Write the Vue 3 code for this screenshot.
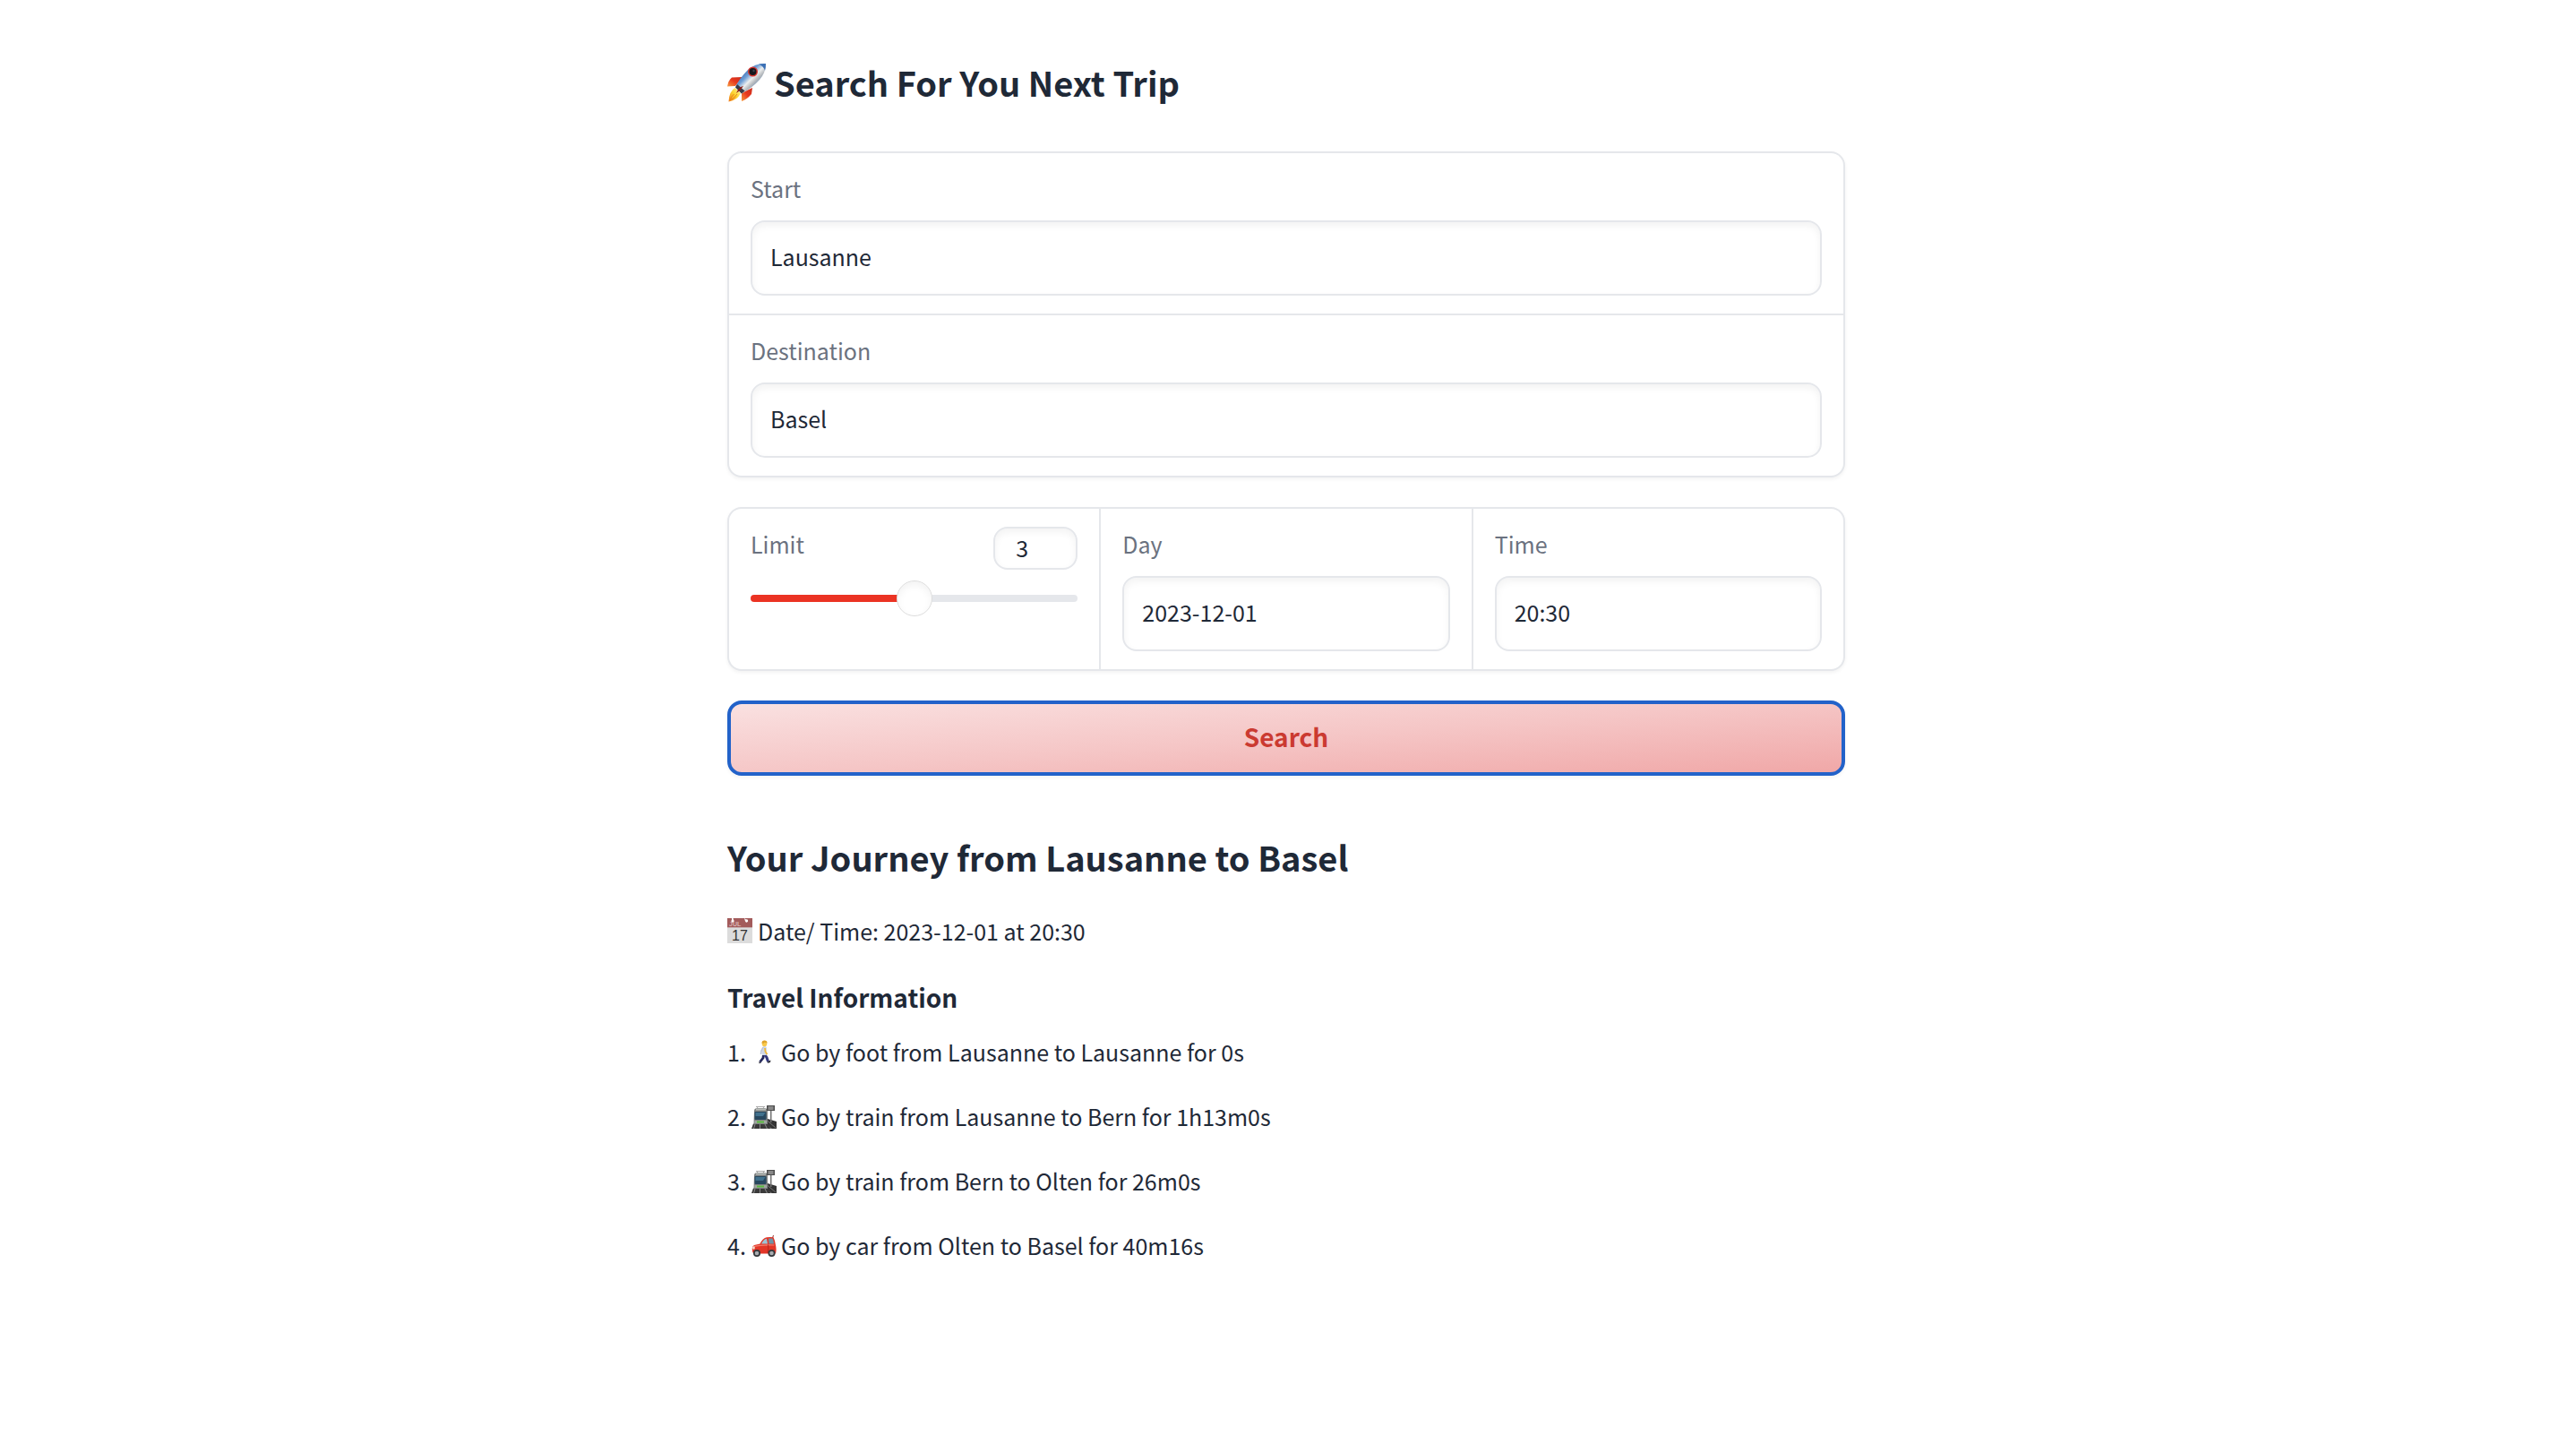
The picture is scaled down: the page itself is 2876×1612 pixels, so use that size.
<script setup>
import { ref, computed } from 'vue'

const start = ref('Lausanne')
const destination = ref('Basel')
const limit = ref(3)
const day = ref('2023-12-01')
const time = ref('20:30')

const min = 1
const max = 5
const fill = computed(() => `${((limit.value - min) / (max - min)) * 100}%`)

const steps = [
  { icon: 'walk', text: 'Go by foot from Lausanne to Lausanne for 0s' },
  { icon: 'train', text: 'Go by train from Lausanne to Bern for 1h13m0s' },
  { icon: 'train', text: 'Go by train from Bern to Olten for 26m0s' },
  { icon: 'car', text: 'Go by car from Olten to Basel for 40m16s' },
]
</script>

<template>
  <div class="page">
    <main class="content">
      <h1 class="title">
        <svg class="rocket" viewBox="0 0 44 44" aria-hidden="true">
          <defs>
            <linearGradient id="hull" x1="0" y1="0" x2="1" y2="1">
              <stop offset="0.25" stop-color="#3a6cb0" />
              <stop offset="0.4" stop-color="#6f9fd6" />
              <stop offset="0.52" stop-color="#eceeee" />
              <stop offset="0.62" stop-color="#b4b8bc" />
              <stop offset="0.78" stop-color="#4f7db4" />
            </linearGradient>
            <linearGradient id="flame" x1="1" y1="0" x2="0" y2="1">
              <stop offset="0" stop-color="#fff3a0" />
              <stop offset="0.5" stop-color="#fbd32f" />
              <stop offset="1" stop-color="#f07818" />
            </linearGradient>
            <linearGradient id="fin" x1="1" y1="0" x2="0" y2="1">
              <stop offset="0" stop-color="#c92c1c" />
              <stop offset="0.5" stop-color="#e8391f" />
              <stop offset="1" stop-color="#f79a3e" />
            </linearGradient>
          </defs>
          <path d="M17 16 L5 16.500 Q1 20 0 26.500 L9 26 Z" fill="url(#fin)" />
          <path d="M28 28 L27 35 Q22 41 16 43 L16 34 Z" fill="url(#fin)" />
          <path d="M8.500 28 Q2 32 1.500 43.500 Q11 42 15 34 Z" fill="url(#flame)" />
          <path d="M7.500 35 Q4 38 3 42 Q8 40 11 35" fill="none" stroke="#e9831b" stroke-width="1" />
          <path d="M43 1 Q32 0 23 8 Q13 18 9 27.500 L16 34.500 Q28 28 36 19 Q43 11 43 1 Z" fill="url(#hull)" />
          <path d="M43 1 Q39 .6 35 1.700 Q41 4 42 9 Q43.200 4.500 43 1 Z" fill="#3a70b5" />
          <path d="M9 27.500 L11 24 L19.500 31.500 L16 34.500 Z" fill="#3b3c47" />
          <path d="M15 27 Q12 29 10 34 Q15 31 18 26 Z" fill="#8d1c16" />
          <circle cx="28.500" cy="10" r="5.500" fill="#d6342e" />
          <circle cx="28.500" cy="10" r="4" fill="#16181d" />
          <circle cx="29.500" cy="9" r="1.200" fill="#3b4350" />
        </svg>
        <span>Search For You Next Trip</span>
      </h1>

      <form class="form" @submit.prevent>
        <div class="panel rows">
          <div class="field">
            <label class="label" for="start">Start</label>
            <input id="start" v-model="start" class="box" type="text" />
          </div>
          <div class="field">
            <label class="label" for="destination">Destination</label>
            <input id="destination" v-model="destination" class="box" type="text" />
          </div>
        </div>

        <div class="panel columns">
          <div class="field">
            <div class="limit-head">
              <label class="label" for="limit">Limit</label>
              <input v-model.number="limit" class="box number" type="number" :min="min" :max="max" aria-label="Limit value" />
            </div>
            <input id="limit" v-model.number="limit" class="slider" type="range" :min="min" :max="max" :style="{ '--fill': fill }" />
          </div>
          <div class="field">
            <label class="label" for="day">Day</label>
            <input id="day" v-model="day" class="box" type="text" />
          </div>
          <div class="field">
            <label class="label" for="time">Time</label>
            <input id="time" v-model="time" class="box" type="text" />
          </div>
        </div>

        <button class="search" type="submit">Search</button>
      </form>

      <section class="result">
        <h2 class="title">Your Journey from Lausanne to Basel</h2>
        <p class="line date">
          <svg class="calendar" viewBox="0 0 28 28" aria-hidden="true">
            <rect width="28" height="28" fill="#dcdcdc" />
            <rect width="28" height="10" fill="#a35b5b" />
            <rect y="10" width="28" height="1" fill="#c9b3b3" />
            <path d="M5 0 L6.500 0 L7 2 A1.600 1.600 0 1 1 5 2 Z M19 0 L21 1.500 A1.600 1.600 0 1 1 20 3.500 Z" fill="#fff" />
            <text x="2" y="9" class="month">JUL</text>
            <text x="14" y="25" text-anchor="middle" class="date-number">17</text>
          </svg>
          <span>Date/ Time: 2023-12-01 at 20:30</span>
        </p>
        <h3 class="subtitle">Travel Information</h3>
        <ol class="steps">
          <li v-for="(step, i) in steps" :key="i" class="line">
            <span class="index">{{ i + 1 }}.</span>
            <svg v-if="step.icon === 'walk'" class="icon" viewBox="0 0 28 28" aria-hidden="true">
              <path d="M13.500 17 L13 21 L9.500 25.500" fill="none" stroke="#25285c" stroke-width="2.800" />
              <path d="M14.500 17 L17 20.500 L18.500 25" fill="none" stroke="#34397f" stroke-width="3" />
              <path d="M8.500 25 L11 26.500 L8.500 27.200 Z M17.500 25.500 L21.500 23.500 L21 26 L18 26.800 Z" fill="#2a2b36" />
              <path d="M13 8 Q16.500 7 17 10 L16.500 18 L12 18 Q11.500 12 13 8 Z" fill="#cfd8e8" />
              <path d="M13 9 L11 13 L10.500 17" fill="none" stroke="#bcc6da" stroke-width="1.600" />
              <path d="M15 10 L15.500 14 L17.500 17" fill="none" stroke="#f0b93c" stroke-width="1.800" />
              <ellipse cx="14.500" cy="5" rx="2.800" ry="3.200" fill="#f9c94b" />
              <path d="M11.500 4.500 Q11.500 1.500 14.500 1.500 Q17.800 1.500 17.500 4.500 Q14 3 13.500 5 Z" fill="#dfa32c" />
            </svg>
            <svg v-else-if="step.icon === 'train'" class="icon" viewBox="0 0 28 28" aria-hidden="true">
              <path d="M2 22.500 L18 22.500 L22 28 L0 28 Z" fill="#3a3a3a" />
              <path d="M4 23 L2.500 28 M9.500 23 L9.500 28 M15 23 L17.500 28" stroke="#8b8b8b" stroke-width="1" />
              <path d="M18 17 L28 20 L28 28 L22.500 28 L16 22 Z" fill="#343434" />
              <path d="M17.500 19 L27 27" stroke="#777" stroke-width="1" />
              <path d="M5 3.500 H15 M7 3.500 L6 6 M13 3.500 L14 6" stroke="#aaa" stroke-width="1" fill="none" />
              <path d="M3 8 Q3 5 7 5 H14 Q18 5 18 8 L18 23 L2.500 23 Z" fill="#7d8080" />
              <rect x="5" y="5.500" width="11" height="2" fill="#b8bbb8" />
              <rect x="3.500" y="9" width="13" height="9" rx="1" fill="#28485e" />
              <path d="M4.500 10 H15.500 L13 14 H4.500 Z" fill="#41718d" />
              <rect x="3.500" y="19" width="13.500" height="3" fill="#a0a6a0" />
              <rect x="6" y="19.500" width="8" height="2" fill="#58b83e" />
              <rect x="21" y="7" width="1.500" height="14" fill="#737373" />
              <rect x="17" y="2" width="9" height="6" fill="#4d4d4d" />
              <path d="M18.500 4 H24.500 M18.500 6 H24.500" stroke="#c4c4c4" stroke-width="1" />
            </svg>
            <svg v-else class="icon" viewBox="0 0 28 28" aria-hidden="true">
              <path d="M23.500 6 L24.500 3" stroke="#8f3029" stroke-width="1" />
              <path d="M1 20 Q0 15.500 3 14 L9.500 12.500 Q12.500 6 17 5.200 Q21 4.600 24.500 5.200 Q26.500 9 27 14 Q28.200 19 27 23.500 L2.500 23.500 Q.7 22 1 20 Z" fill="#e23628" />
              <path d="M11 12.500 Q13.500 7.500 17 6.800 L18 12.500 Z" fill="#9cc3d4" />
              <path d="M19 6.600 L23.500 6.600 Q24.800 9 25 12.500 L19.500 12.500 Z" fill="#6f94a6" />
              <path d="M3 15.500 Q10 13.500 25.500 14" fill="none" stroke="#f37b6b" stroke-width="1.200" />
              <path d="M18.500 13.500 Q19.500 18 18 22.500" fill="none" stroke="#b5271e" stroke-width="1" />
              <ellipse cx="2.500" cy="17" rx="1.300" ry="1.800" fill="#f7e7d6" />
              <circle cx="6" cy="23" r="4" fill="#35383b" />
              <circle cx="6" cy="23" r="2.300" fill="#a8acb0" />
              <circle cx="22.500" cy="23" r="4" fill="#35383b" />
              <circle cx="22.500" cy="23" r="2.300" fill="#a8acb0" />
            </svg>
            <span>{{ step.text }}</span>
          </li>
        </ol>
      </section>
    </main>
  </div>
</template>

<style>
body {
  margin: 0;
  background: #fff;
}
</style>

<style scoped>
.page {
  box-sizing: border-box;
  padding: 62px 4px 60px 0;
  font-family: "Noto Sans CJK SC", "Noto Sans", sans-serif;
  font-size: 25px;
  line-height: 40px;
  color: #1f2937;
}

.content {
  max-width: 1248px;
  margin: 0 auto;
}

.title {
  display: flex;
  align-items: center;
  margin: 0;
  font-size: 38px;
  font-weight: 600;
  line-height: 60px;
}

.rocket {
  width: 44px;
  height: 44px;
  margin-right: 8px;
}

.form {
  display: flex;
  flex-direction: column;
  gap: 33px;
  margin-top: 47px;
}

.panel {
  display: grid;
  gap: 2px;
  overflow: hidden;
  border: 2px solid #e5e7eb;
  border-radius: 16px;
  background: #e5e7eb;
  box-shadow: 0 2px 4px rgba(0, 0, 0, 0.05);
}

.columns {
  grid-template-columns: repeat(3, 1fr);
}

.field {
  min-width: 0;
  padding: 20px 24px;
  background: #fff;
}

.label {
  display: block;
  margin-bottom: 17px;
  line-height: 38px;
  color: #6b7280;
}

.box {
  display: block;
  box-sizing: border-box;
  width: 100%;
  height: 84px;
  padding: 0 20px 4px;
  border: 2px solid #e5e7eb;
  border-radius: 16px;
  outline: none;
  background: #fff;
  box-shadow: inset 0 4px 8px rgba(0, 0, 0, 0.05);
  font: inherit;
  color: inherit;
}

.limit-head {
  display: flex;
  justify-content: space-between;
  align-items: flex-start;
}

.number {
  width: 94px;
  height: 48px;
  padding: 0 0 2px 23px;
}

.slider {
  display: block;
  width: 100%;
  height: 40px;
  margin: 5px 0 0;
  appearance: none;
  background: transparent;
}

.slider::-webkit-slider-runnable-track {
  height: 8px;
  border-radius: 4px;
  background: linear-gradient(to right, #eb3323 var(--fill), #e5e7eb var(--fill));
}

.slider::-webkit-slider-thumb {
  appearance: none;
  box-sizing: border-box;
  width: 40px;
  height: 40px;
  margin-top: -16px;
  border: 1px solid #dcdcdc;
  border-radius: 50%;
  background: #fff;
  box-shadow: inset 0 4px 8px rgba(0, 0, 0, 0.05);
}

.search {
  height: 84px;
  padding: 0 0 4px;
  border: 4px solid #2262c9;
  border-radius: 16px;
  background: linear-gradient(to bottom right, #fae2e2, #f5c6c6 50%, #f0a6a6) border-box;
  box-shadow: 0 2px 4px rgba(0, 0, 0, 0.05);
  font: inherit;
  font-size: 28px;
  font-weight: 600;
  color: #cb3a31;
}

.result {
  margin-top: 61px;
}

.line {
  display: flex;
  align-items: center;
}

.date {
  margin: 32px 0 0;
}

.calendar {
  overflow: visible;
  width: 28px;
  height: 28px;
  margin-right: 6px;
}

.month {
  font-family: "Liberation Sans", sans-serif;
  font-size: 7px;
  font-weight: 600;
  fill: #d9b3b3;
}

.date-number {
  font-family: "Liberation Sans", sans-serif;
  font-size: 16px;
  fill: #333;
}

.subtitle {
  margin: 34px 0 21px;
  font-size: 28px;
  font-weight: 600;
  line-height: 40px;
}

.steps {
  display: flex;
  flex-direction: column;
  gap: 32px;
  margin: 0;
  padding: 0;
  list-style: none;
}

.index {
  width: 27px;
}

.icon {
  width: 28px;
  height: 28px;
  margin-right: 5px;
}
</style>
